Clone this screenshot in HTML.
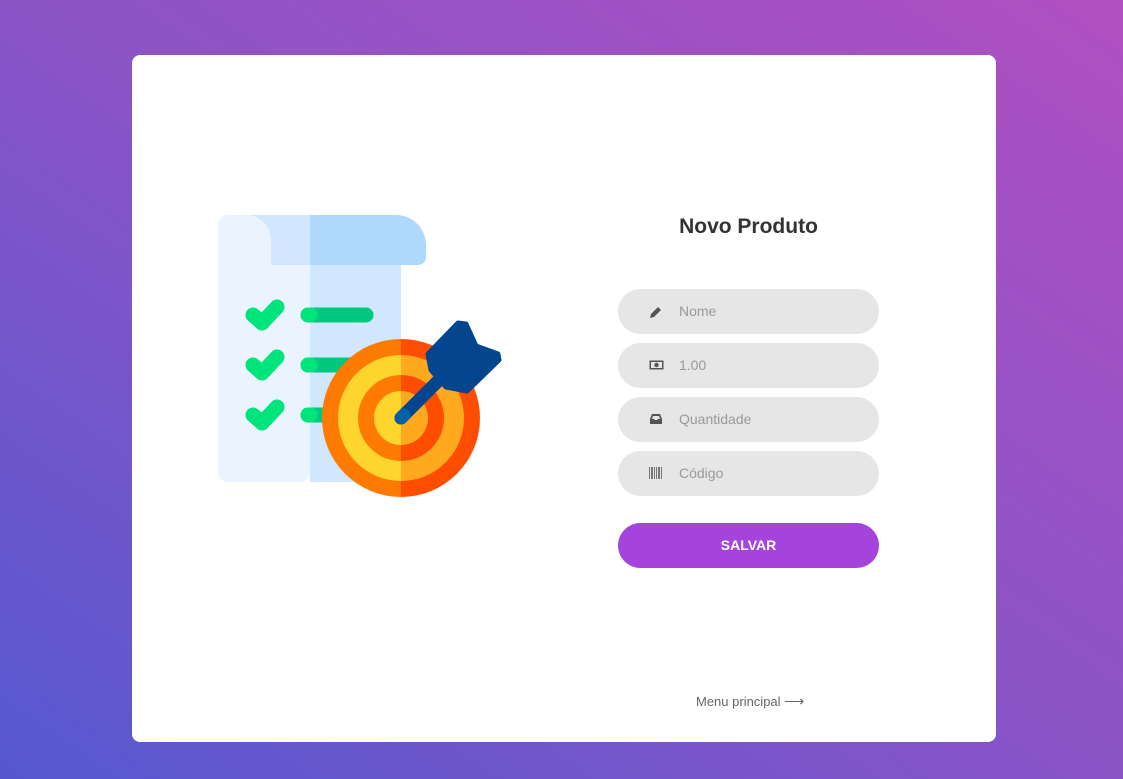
<!DOCTYPE html>
<html><head><meta charset="utf-8"><style>
html,body{margin:0;padding:0;width:1123px;height:779px;overflow:hidden;font-family:"Liberation Sans",sans-serif}
body{background:linear-gradient(to top right,#5658d0 0%,#8a54c7 50%,#b04fc2 100%);position:relative}
.card{position:absolute;left:132px;top:55px;width:864px;height:687px;background:#fff;border-radius:8px}
h1{position:absolute;left:618px;width:261px;top:215px;margin:0;text-align:center;font-size:21px;font-weight:bold;color:#333}
.f{position:absolute;left:618px;width:261px;height:45px;border-radius:23px;background:#e6e6e6}
.f span{position:absolute;left:61px;top:14px;font-size:14px;color:#999}
.f svg{position:absolute;left:31px;top:16px}
.btn{position:absolute;left:618px;top:523px;width:261px;height:45px;border-radius:23px;background:#a444dc;color:#fff;font-weight:bold;font-size:14px;text-align:center;line-height:45px}
.menu{position:absolute;left:696px;top:693px;font-size:13px;color:#666}
</style></head><body>
<div class="card"></div>
<svg style="position:absolute;left:0;top:0" width="1123" height="779">
<rect x="218" y="215" width="92" height="267" rx="10" fill="#ebf4fe"/>
<rect x="310" y="240" width="91" height="242" fill="#d0e7fd"/>
<rect x="240" y="215" width="70" height="50" fill="#d0e7fd"/>
<path d="M310 215 H396 A30 30 0 0 1 426 245 V257 A8 8 0 0 1 418 265 H310Z" fill="#afd8fd"/>
<path d="M248 215 A30 30 0 0 1 271 240 V265 H310 V215Z" fill="#d0e7fd"/>
<path d="M248 215 H238 A20 20 0 0 0 218 235 V265 H271 V240 A25 25 0 0 0 248 215Z" fill="#ebf4fe"/>
<path d="M271 255 A10 10 0 0 0 281 265 H310 V250 H271Z" fill="#d0e7fd"/>
<g stroke-linecap="round" stroke-linejoin="round" fill="none" stroke-width="15">
<path d="M253 315 L262 323 L277 307" stroke="#00e57b"/>
<path d="M253 365 L262 373 L277 357" stroke="#00e57b"/>
<path d="M253 415 L262 423 L277 407" stroke="#00e57b"/>
<path d="M308 315 H366" stroke="#00c97f"/>
<path d="M308 365 H366" stroke="#00c97f"/>
<path d="M308 415 H366" stroke="#00c97f"/>
<path d="M308 315 H310" stroke="#00e57b"/>
<path d="M308 365 H310" stroke="#00e57b"/>
<path d="M308 415 H310" stroke="#00e57b"/>
</g>
<path d="M401 339 A79 79 0 0 0 401 497Z" fill="#ff7a00"/>
<path d="M401 339 A79 79 0 0 1 401 497Z" fill="#ff4d00"/>
<path d="M401 355 A63 63 0 0 0 401 481Z" fill="#fed52c"/>
<path d="M401 355 A63 63 0 0 1 401 481Z" fill="#ffaa1e"/>
<path d="M401 375 A43 43 0 0 0 401 461Z" fill="#ff7a00"/>
<path d="M401 375 A43 43 0 0 1 401 461Z" fill="#ff4d00"/>
<path d="M401 391 A27 27 0 0 0 401 445Z" fill="#fed52c"/>
<path d="M401 391 A27 27 0 0 1 401 445Z" fill="#ffaa1e"/>
<path d="M401 418 L445 374" stroke="#03458f" stroke-width="13" stroke-linecap="round"/>
<path d="M401 418 L404 415" stroke="#0060a8" stroke-width="13" stroke-linecap="round"/>
<polygon points="428,354 458,323 466,324 476,346 498,354 499,360 467,391 446,387 431,370" fill="#03458f" stroke="#03458f" stroke-width="5" stroke-linejoin="round"/>
</svg>
<h1>Novo Produto</h1>
<div class="f" style="top:289px"><svg width="14" height="14" viewBox="0 0 14 14"><path d="M1 13 L2 9 L9 2 L12 5 L5 12Z" fill="#555"/></svg><span>Nome</span></div>
<div class="f" style="top:343px"><svg width="15" height="12" viewBox="0 0 15 12"><rect x="0.5" y="1.5" width="14" height="9" fill="#555"/><rect x="2" y="3" width="11" height="6" fill="#e6e6e6"/><circle cx="7.5" cy="6" r="2.2" fill="#555"/></svg><span>1.00</span></div>
<div class="f" style="top:397px"><svg width="14" height="12" viewBox="0 0 14 12"><path d="M1 11 V6 L3 1 H11 L13 6 V11Z" fill="#555"/><path d="M3 6 L4 3 H10 L11 6 H9 L8 7 H6 L5 6Z" fill="#e6e6e6"/></svg><span>Quantidade</span></div>
<div class="f" style="top:451px"><svg width="14" height="12" viewBox="0 0 14 12" fill="#777"><rect x="0" y="0" width="1" height="12"/><rect x="2" y="0" width="2" height="12"/><rect x="5" y="0" width="1" height="12"/><rect x="7" y="0" width="1" height="12"/><rect x="9" y="0" width="2" height="12"/><rect x="12" y="0" width="1" height="12"/></svg><span>Código</span></div>
<div class="btn">SALVAR</div>
<div class="menu">Menu principal <span style="font-size:14px">⟶</span></div>
</body></html>
